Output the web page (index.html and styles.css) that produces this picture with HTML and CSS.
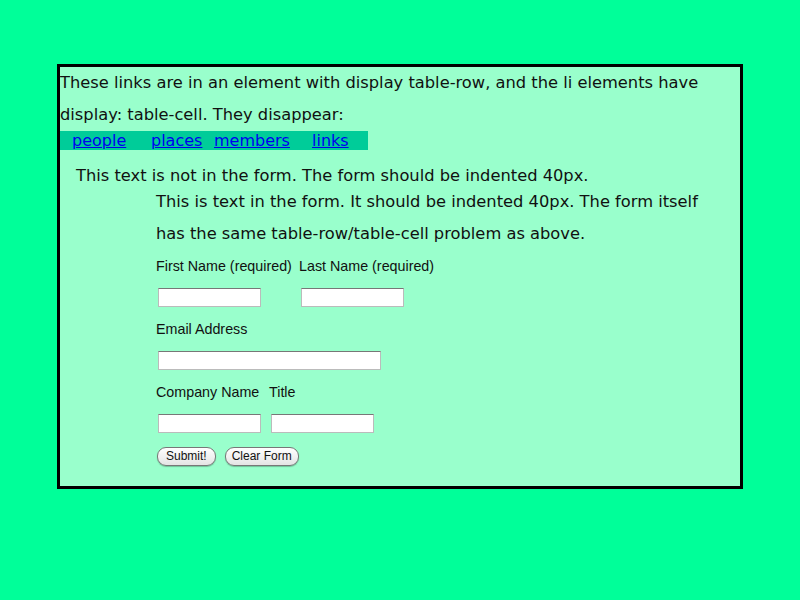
FILE: index.html
```html
<!DOCTYPE html>
<html>
<head>
<meta charset="utf-8">
<link rel="stylesheet" href="styles.css">
</head>
<body>
<div class="box">
  <p class="intro">These links are in an element with display table-row, and the li elements have display: table-cell. They disappear:</p>
  <ul class="bar">
    <li class="c1"><a href="#">people</a></li>
    <li class="c2"><a href="#">places</a></li>
    <li class="c3"><a href="#">members</a></li>
    <li class="c4"><a href="#">links</a></li>
  </ul>
  <p class="outside">This text is not in the form. The form should be indented 40px.</p>
  <form class="form">
    <p class="ftext">This is text in the form. It should be indented 40px. The form itself has the same table-row/table-cell problem as above.</p>
    <div class="row labels"><span class="w1">First Name (required)</span><span>Last Name (required)</span></div>
    <div class="row inputs"><span class="w1"><input type="text"></span><span><input type="text"></span></div>
    <div class="row labels"><span>Email Address</span></div>
    <div class="row inputs"><span><input type="text" class="wide"></span></div>
    <div class="row labels"><span class="w2">Company Name</span><span>Title</span></div>
    <div class="row inputs"><span class="w2"><input type="text"></span><span><input type="text"></span></div>
    <div class="buttons"><button type="button">Submit!</button><button type="button" class="clear">Clear Form</button></div>
  </form>
</div>
</body>
</html>
```
FILE: styles.css
```css
html, body { margin: 0; padding: 0; background: #00ff99; }
body { font-family: "DejaVu Sans", Verdana, sans-serif; font-size: 16.3px; color: #111; }
.box {
  margin: 64px 0 0 57px;
  width: 680px;
  height: 419px;
  border: 3px solid #000;
  background: #99ffcc;
}
.intro { margin: 0; line-height: 32px; }
.bar {
  list-style: none;
  margin: 0; padding: 0;
  display: flex;
  width: 308px;
  height: 19px;
  background: #00cc99;
  line-height: 20px;
  font-size: 16px;
}
.bar li { padding-left: 12px; box-sizing: border-box; }
.bar .c1 { width: 79px; }
.bar .c2 { width: 63px; }
.bar .c3 { width: 98px; }
.bar .c4 { width: 68px; }
.bar a { color: #0000ee; text-decoration: underline; }
.outside { margin: 16px 0 0 16px; line-height: 20px; }
.form { margin: 0 24px 0 96px; }
.ftext { margin: 0; line-height: 32px; }
.row { display: flex; font-family: "Liberation Sans", Arial, sans-serif; font-size: 14.3px; }
.row span { box-sizing: border-box; }
.labels { height: 20px; line-height: 20px; margin-top: 6px; }
.inputs { margin-top: 12px; height: 19px; }
.inputs span { padding-left: 2px; }
.w1 { width: 143px; flex: none; }
.w2 { width: 113px; flex: none; }
.inputs + .labels { margin-top: 12px; }
input {
  box-sizing: border-box;
  width: 103px; height: 19px;
  margin: 0; padding: 0;
  border: 1px solid #bbb;
  border-top-color: #777;
  background: #fff;
  display: block;
}
input.wide { width: 223px; }
.buttons { display: flex; gap: 9px; margin-top: 14px; padding-left: 1px; }
button {
  font-family: "Liberation Sans", Arial, sans-serif;
  font-size: 12px;
  height: 19px;
  padding: 0 8px;
  border: 1px solid #777;
  border-radius: 9px;
  background: linear-gradient(#fff, #e4e4e4);
  color: #111;
  box-shadow: 0 1px 1px rgba(0,0,0,0.25);
  line-height: 17px;
}
button.clear { padding: 0 6px; }
```
